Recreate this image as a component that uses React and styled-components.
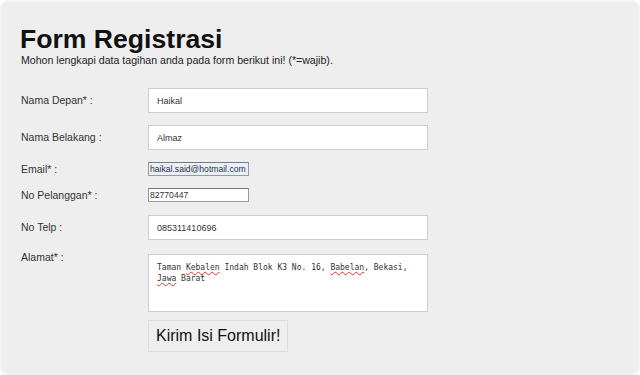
import React from "react";
import styled, { createGlobalStyle } from "styled-components";

const GlobalStyle = createGlobalStyle`
  html, body {
    margin: 0;
    padding: 0;
    background: #ffffff;
  }
  body {
    font-family: "Liberation Sans", Arial, sans-serif;
  }
`;

const Panel = styled.div`
  box-sizing: border-box;
  width: 640px;
  height: 375px;
  background: #eeeeee;
  border-radius: 8px;
  box-shadow: inset 0 1px 3px rgba(255, 255, 255, 0.9);
  padding: 26px 20px 0 21px;
  overflow: hidden;
`;

const Title = styled.h1`
  margin: 0 0 0 -1px;
  font-size: 26.6px;
  line-height: 27px;
  font-weight: bold;
  color: #111;
`;

const Subtitle = styled.p`
  margin: 1px 0 21px;
  font-size: 10.6px;
  line-height: 13px;
  color: #222;
`;

const Row = styled.div`
  display: flex;
  align-items: ${({ $top }) => ($top ? "flex-start" : "center")};
  margin-bottom: ${({ $gap }) => $gap}px;
`;

const Label = styled.label`
  width: 127px;
  flex: none;
  font-size: 10.5px;
  line-height: 13px;
  color: #333;
  margin-top: ${({ $top }) => ($top ? "-3px" : "0")};
`;

const WideInput = styled.input`
  box-sizing: border-box;
  width: 280px;
  height: 25px;
  margin: 0;
  padding: 0 8px;
  border: 1px solid #cccccc;
  background: #fff;
  font-family: "Liberation Sans", Arial, sans-serif;
  font-size: 9px;
  color: #333;
  outline: none;
`;

const SmallInput = styled.input`
  box-sizing: border-box;
  width: 101px;
  height: 14px;
  margin: 0;
  padding: 0 0 0 1px;
  border: 1px solid #9a9a9a;
  border-top-color: #7a7a7a;
  background: ${({ $filled }) => ($filled ? "#e8f0fe" : "#fff")};
  font-family: "Liberation Sans", Arial, sans-serif;
  font-size: 8.6px;
  color: #333;
  outline: none;
`;

const TextBox = styled.div`
  box-sizing: border-box;
  width: 280px;
  height: 58px;
  padding: 7px 8px;
  border: 1px solid #cccccc;
  background: #fff;
  font-family: "DejaVu Sans Mono", "Liberation Mono", monospace;
  font-size: 8px;
  line-height: 11px;
  color: #333;
`;

const Typo = styled.span`
  text-decoration: underline wavy #e03030;
  text-decoration-thickness: 1px;
  text-underline-offset: 1px;
`;

const SubmitButton = styled.button`
  box-sizing: border-box;
  margin-left: 127px;
  height: 32px;
  padding: 0 7px;
  border: 1px solid #dcdcdc;
  background: #eeeeee;
  font-family: "Liberation Sans", Arial, sans-serif;
  font-size: 16px;
  color: #111;
`;

const App = () => {
  return (
    <>
      <GlobalStyle />
      <Panel>
        <Title>Form Registrasi</Title>
        <Subtitle>Mohon lengkapi data tagihan anda pada form berikut ini! (*=wajib).</Subtitle>
        <Row $gap={12}>
          <Label>Nama Depan* :</Label>
          <WideInput defaultValue="Haikal" />
        </Row>
        <Row $gap={12}>
          <Label>Nama Belakang :</Label>
          <WideInput defaultValue="Almaz" />
        </Row>
        <Row $gap={12}>
          <Label>Email* :</Label>
          <SmallInput $filled defaultValue="haikal.said@hotmail.com" />
        </Row>
        <Row $gap={13}>
          <Label>No Pelanggan* :</Label>
          <SmallInput defaultValue="82770447" />
        </Row>
        <Row $gap={14}>
          <Label>No Telp :</Label>
          <WideInput defaultValue="085311410696" />
        </Row>
        <Row $gap={8} $top>
          <Label $top>Alamat* :</Label>
          <TextBox>
            Taman <Typo>Kebalen</Typo> Indah Blok K3 No. 16, <Typo>Babelan</Typo>, Bekasi,
            <br />
            <Typo>Jawa</Typo> Barat
          </TextBox>
        </Row>
        <SubmitButton>Kirim Isi Formulir!</SubmitButton>
      </Panel>
    </>
  );
};

export default App;
